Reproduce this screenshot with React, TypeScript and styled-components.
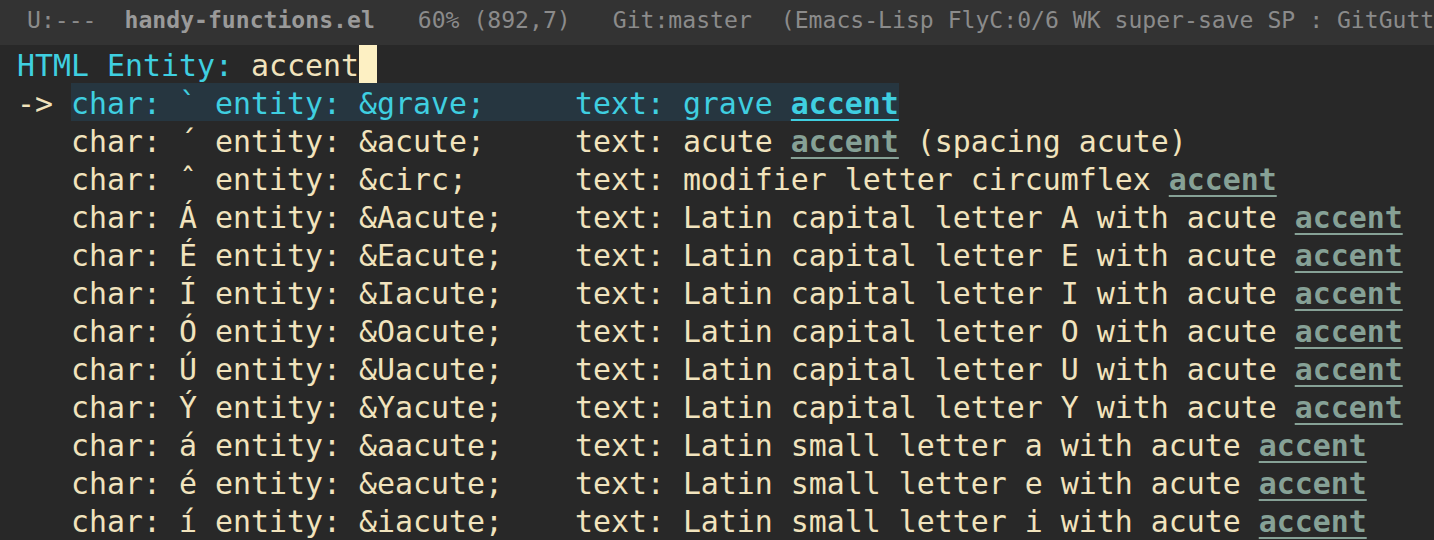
import * as React from "react";
import styled, { createGlobalStyle } from "styled-components";

const GlobalStyle = createGlobalStyle`
  html, body {
    margin: 0;
    padding: 0;
    background: #282828;
  }
`;

const Frame = styled.div`
  width: 1434px;
  height: 540px;
  overflow: hidden;
  background: #282828;
  font-family: "DejaVu Sans Mono", "Liberation Mono", monospace;
  color: #f1e3bd;
`;

const ModeLine = styled.div`
  height: 45px;
  line-height: 40px;
  padding-left: 27px;
  background: #333333;
  color: #8b8b8b;
  font-size: 23.1px;
  white-space: pre;
  overflow: hidden;
  display: flex;
`;

const Segment = styled.span<{ $gap: number }>`
  margin-left: ${(p) => p.$gap}px;
  flex: none;
`;

const BufferName = styled.b`
  color: #9a9a9a;
  font-weight: bold;
`;

const Line = styled.div`
  height: 38px;
  line-height: 42px;
  font-size: 29.9px;
  padding-left: 17px;
  white-space: pre;
  overflow: hidden;
  display: flex;
  align-items: flex-start;
`;

const Prompt = styled.span`
  color: #3fcfe0;
`;

const Cursor = styled.span`
  width: 18px;
  height: 38px;
  background: #fdf0c3;
`;

const Arrow = styled.span`
  width: 54px;
  flex: none;
`;

const Candidate = styled.span<{ $selected?: boolean }>`
  height: 38px;
  background: ${(p) => (p.$selected ? "#263640" : "transparent")};
  color: ${(p) => (p.$selected ? "#3fcfe0" : "#f1e3bd")};
`;

const Match = styled.b<{ $selected?: boolean }>`
  font-weight: bold;
  color: ${(p) => (p.$selected ? "#3fcfe0" : "#86a196")};
  text-decoration: underline;
  text-decoration-thickness: 2px;
  text-underline-offset: 5px;
`;

interface Entity {
  char: string;
  name: string;
  text: string;
}

const entities: Entity[] = [
  { char: "`", name: "grave", text: "grave accent" },
  { char: "´", name: "acute", text: "acute accent (spacing acute)" },
  { char: "ˆ", name: "circ", text: "modifier letter circumflex accent" },
  { char: "Á", name: "Aacute", text: "Latin capital letter A with acute accent" },
  { char: "É", name: "Eacute", text: "Latin capital letter E with acute accent" },
  { char: "Í", name: "Iacute", text: "Latin capital letter I with acute accent" },
  { char: "Ó", name: "Oacute", text: "Latin capital letter O with acute accent" },
  { char: "Ú", name: "Uacute", text: "Latin capital letter U with acute accent" },
  { char: "Ý", name: "Yacute", text: "Latin capital letter Y with acute accent" },
  { char: "á", name: "aacute", text: "Latin small letter a with acute accent" },
  { char: "é", name: "eacute", text: "Latin small letter e with acute accent" },
  { char: "í", name: "iacute", text: "Latin small letter i with acute accent" },
];

const query = "accent";

const CandidateRow = ({ entity, selected }: { entity: Entity; selected: boolean }) => {
  const head = `char: ${entity.char} entity: &${entity.name};`.padEnd(28, " ");
  const at = entity.text.indexOf(query);
  const before = entity.text.slice(0, at);
  const after = entity.text.slice(at + query.length);
  return (
    <Line>
      <Arrow>{selected ? "-> " : "   "}</Arrow>
      <Candidate $selected={selected}>
        {head}text: {before}
        <Match $selected={selected}>{query}</Match>
      </Candidate>
      <span>{after}</span>
    </Line>
  );
};

export default function App() {
  return (
    <Frame>
      <GlobalStyle />
      <ModeLine>
        <Segment $gap={0}>U:---</Segment>
        <Segment $gap={28}>
          <BufferName>handy-functions.el</BufferName>
        </Segment>
        <Segment $gap={43}>60% (892,7)</Segment>
        <Segment $gap={42}>Git:master</Segment>
        <Segment $gap={29}>(Emacs-Lisp FlyC:0/6 WK super-save SP : GitGutter)</Segment>
      </ModeLine>
      <Line>
        <Prompt>HTML Entity: </Prompt>
        accent
        <Cursor />
      </Line>
      {entities.map((e, i) => (
        <CandidateRow key={e.name} entity={e} selected={i === 0} />
      ))}
    </Frame>
  );
}
